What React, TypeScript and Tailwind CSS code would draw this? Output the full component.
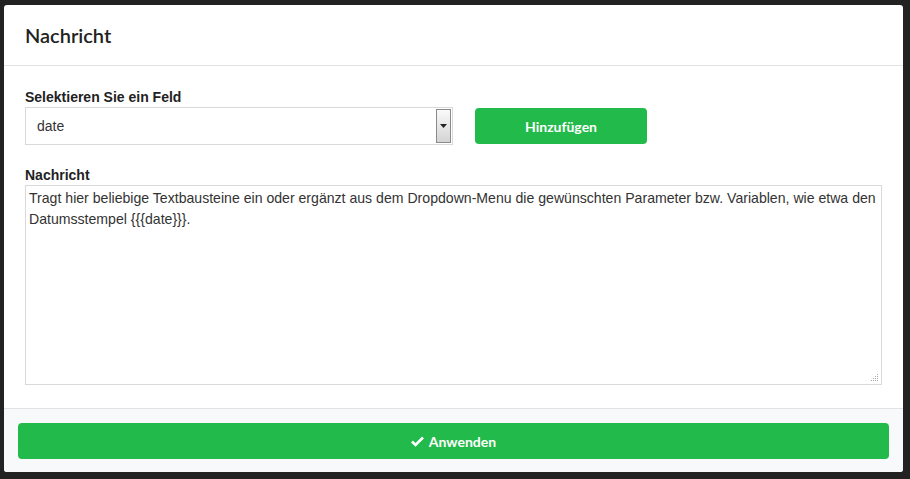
import React from "react";

export default function App() {
  return (
    <div className="w-[910px] h-[479px] bg-[#222222] pt-[5px] pl-[4px] pr-[7px] pb-[7px]">
      <div className="h-[467px] bg-white rounded-[3px] flex flex-col overflow-hidden">
        <div className="h-[61px] border-b border-[#e2e2e2] flex items-center px-[21px] shrink-0">
          <h1 className="text-[20px] text-[#222] font-['Lato',sans-serif] font-semibold">Nachricht</h1>
        </div>
        <div className="flex-1 px-[21px] pt-[23px] font-['Liberation_Sans',Arial,sans-serif]">
          <div className="text-[14px] font-bold text-[#222] leading-[16px]">Selektieren Sie ein Feld</div>
          <div className="flex items-center mt-[2px]">
            <div className="w-[428px] h-[38px] border border-[#d9d9d9] flex items-center relative">
              <span className="pl-[11px] text-[14px] text-[#333]">date</span>
              <div className="absolute right-[1px] top-[1px] bottom-[1px] w-[15px] border border-[#8a8a8a] bg-gradient-to-b from-[#fafafa] to-[#d4d4d4] flex items-center justify-center">
                <svg width="7" height="4" viewBox="0 0 7 4"><path d="M0 0h7L3.5 4z" fill="#222" /></svg>
              </div>
            </div>
            <button className="ml-[22px] w-[172px] h-[36px] bg-[#22ba4a] rounded-[4px] text-white text-[14px] font-bold font-['Lato',sans-serif]">Hinzufügen</button>
          </div>
          <div className="text-[14px] font-bold text-[#222] leading-[16px] mt-[22px]">Nachricht</div>
          <div className="w-[857px] h-[200px] border border-[#d9d9d9] mt-[2px] relative px-[3px] pt-[2px] text-[14.1px] leading-[21px] text-[#333]">
            Tragt hier beliebige Textbausteine ein oder ergänzt aus dem Dropdown-Menu die gewünschten Parameter bzw. Variablen, wie etwa den Datumsstempel {"{{{date}}}"}.
            <svg className="absolute right-[2px] bottom-[2px]" width="8" height="8" viewBox="0 0 8 8">
              <g fill="#aaa">
                <rect x="6" y="0" width="1" height="1" />
                <rect x="4" y="2" width="1" height="1" /><rect x="6" y="2" width="1" height="1" />
                <rect x="2" y="4" width="1" height="1" /><rect x="4" y="4" width="1" height="1" /><rect x="6" y="4" width="1" height="1" />
                <rect x="0" y="6" width="1" height="1" /><rect x="2" y="6" width="1" height="1" /><rect x="4" y="6" width="1" height="1" /><rect x="6" y="6" width="1" height="1" />
              </g>
            </svg>
          </div>
        </div>
        <div className="h-[64px] border-t border-[#e2e2e2] bg-[#f8f9fa] px-[14px] pt-[14px] shrink-0">
          <button className="w-full h-[36px] bg-[#22ba4a] rounded-[4px] text-white text-[14px] font-bold font-['Lato',sans-serif] flex items-center justify-center gap-[5px]">
            <svg width="13" height="11" viewBox="0 0 13 11"><path d="M1 5.5l3.5 3.5L12 1.5" stroke="white" strokeWidth="2.6" fill="none" /></svg>
            Anwenden
          </button>
        </div>
      </div>
    </div>
  );
}
